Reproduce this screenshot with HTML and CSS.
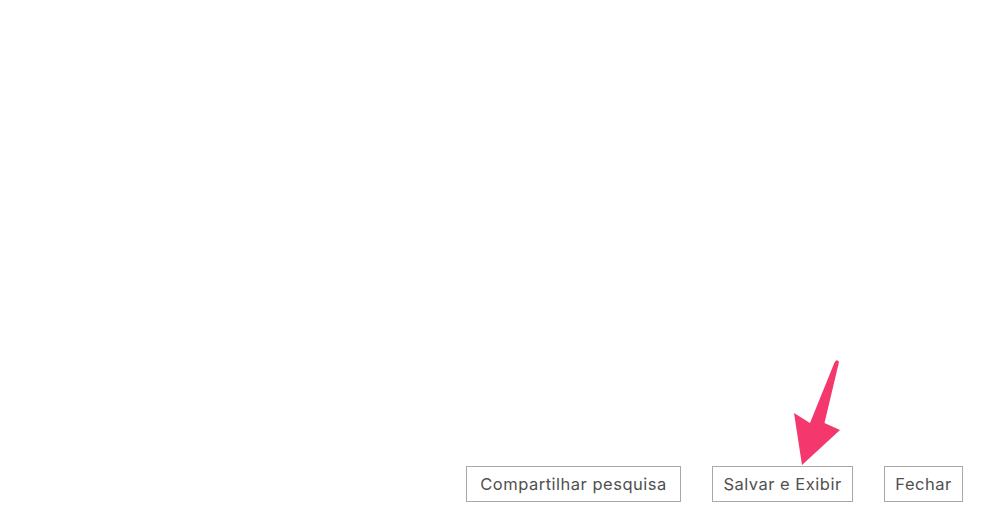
FILE: index.html
```html
<!DOCTYPE html>
<html lang="pt">
<head>
<meta charset="utf-8">
<title>Pesquisa</title>
<link rel="stylesheet" href="styles.css">
</head>
<body>
<div class="page">
  <div class="actions">
    <button class="btn btn-share">Compartilhar pesquisa</button>
    <button class="btn btn-save">Salvar e Exibir</button>
    <button class="btn btn-close">Fechar</button>
  </div>
  <svg class="arrow" viewBox="790 358 55 110" width="55" height="110" aria-hidden="true">
    <path d="M834.5 362.5 Q837 358.5 839 362 L824.5 423 L840 430 L802 465 L794 413 L810 423 Z" fill="#f4376d"/>
  </svg>
</div>
</body>
</html>
```
FILE: styles.css
```css
html, body {
  margin: 0;
  padding: 0;
  background: #ffffff;
}
.page {
  position: relative;
  width: 984px;
  height: 520px;
  display: flex;
  justify-content: flex-end;
  align-items: flex-end;
  padding: 0 21px 18px 0;
  box-sizing: border-box;
}
.actions {
  display: flex;
  gap: 31px;
}
.btn {
  height: 36px;
  box-sizing: border-box;
  border: 1px solid #a8a8a8;
  background: #ffffff;
  color: #505050;
  font-family: Inter, "Liberation Sans", Arial, sans-serif;
  font-size: 16.5px;
  letter-spacing: 0.5px;
  padding: 0 6px;
  margin: 0;
  border-radius: 0;
}
.btn-share { width: 215px; }
.btn-save { width: 141px; }
.btn-close { width: 79px; }
.arrow {
  position: absolute;
  left: 790px;
  top: 358px;
}
```
